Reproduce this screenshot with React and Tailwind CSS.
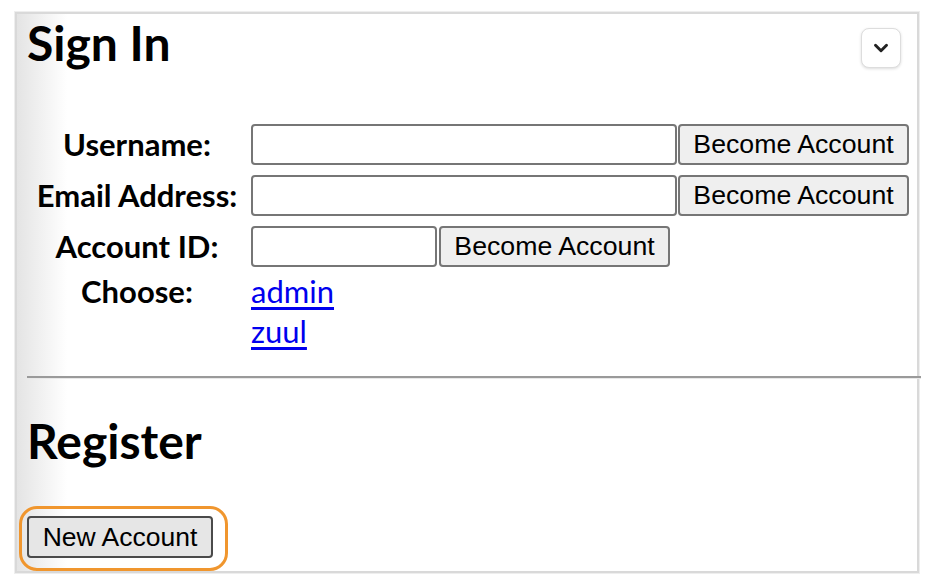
import { ChevronDown } from 'lucide-react';

const LabelCell = ({ children }) => (
  <div className="w-[220px] shrink-0 text-center font-['Lato',sans-serif] text-[31px] font-bold leading-[41px] text-black">
    {children}
  </div>
);

const TextBox = ({ width }) => (
  <input
    type="text"
    className={`h-[41px] ${width} rounded-[4px] border-2 border-[#767676] bg-white px-2 outline-none`}
  />
);

const BecomeButton = () => (
  <button
    type="button"
    className="h-[41px] w-[231px] rounded-[4px] border-2 border-[#767676] bg-[#efefef] font-['Liberation_Sans',Arial,sans-serif] text-[26.7px] leading-none text-black"
  >
    Become Account
  </button>
);

const App = () => {
  return (
    <div className="h-[588px] w-[932px] bg-white pl-[14px] pt-[11px]">
      <div className="h-[563px] w-[906px] border border-[#eeeeee]">
        <div className="h-full w-full border-2 border-[#d9d9d9] bg-[linear-gradient(to_right,#e4e4e4,#ffffff_50px)] pl-[10px]">
          <div className="flex items-start justify-between">
            <h1 className="mt-[4px] font-['Lato',sans-serif] text-[48px] font-bold leading-[50px] text-black">
              Sign In
            </h1>
            <button
              type="button"
              className="mr-[16px] mt-[14px] flex h-[40px] w-[40px] items-center justify-center rounded-[8px] border border-[#dddddd] bg-white shadow-[0_1px_3px_rgba(0,0,0,0.14)]"
            >
              <ChevronDown size={22} strokeWidth={3.2} className="text-[#222]" />
            </button>
          </div>

          <div className="mt-[56px] flex flex-col gap-[10px]">
            <div className="flex items-center">
              <LabelCell>Username:</LabelCell>
              <div className="ml-[4px] flex gap-[1px]">
                <TextBox width="w-[426px]" />
                <BecomeButton />
              </div>
            </div>
            <div className="flex items-center">
              <LabelCell>Email Address:</LabelCell>
              <div className="ml-[4px] flex gap-[1px]">
                <TextBox width="w-[426px]" />
                <BecomeButton />
              </div>
            </div>
            <div className="flex items-center">
              <LabelCell>Account ID:</LabelCell>
              <div className="ml-[4px] flex gap-[2px]">
                <TextBox width="w-[186px]" />
                <BecomeButton />
              </div>
            </div>
          </div>

          <div className="mt-[4px] flex items-start">
            <div className="w-[220px] shrink-0 text-center font-['Lato',sans-serif] text-[31px] font-bold leading-[40px] text-black">
              Choose:
            </div>
            <div className="ml-[4px] flex flex-col font-['Lato',sans-serif] text-[31px] leading-[40px]">
              <a href="#" className="text-[#0000ee] underline underline-offset-[4px]">
                admin
              </a>
              <a href="#" className="text-[#0000ee] underline underline-offset-[4px]">
                zuul
              </a>
            </div>
          </div>

          <div className="-mr-[4px] mt-[25px] border-t-2 border-b border-t-[#9a9a9a] border-b-[#e8e8e8]" />

          <h2 className="mt-[37px] font-['Lato',sans-serif] text-[48px] font-bold leading-[50px] text-black">
            Register
          </h2>

          <div className="-ml-[8px] mt-[40px] inline-block rounded-[18px] border-[3px] border-[#f0962e] pb-[10px] pl-[5px] pr-[12px] pt-[7px]">
            <button
              type="button"
              className="h-[42px] w-[186px] rounded-[4px] border-2 border-[#4a4a4a] bg-[#e6e6e6] font-['Liberation_Sans',Arial,sans-serif] text-[26.5px] leading-none text-black"
            >
              New Account
            </button>
          </div>
        </div>
      </div>
    </div>
  );
};

export default App;
